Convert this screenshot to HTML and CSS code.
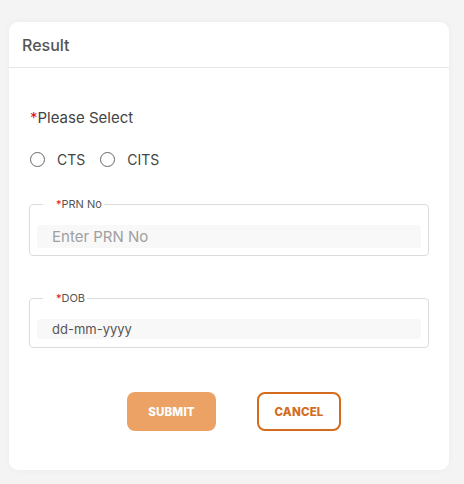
FILE: index.html
```html
<!DOCTYPE html>
<html>
<head>
<meta charset="utf-8">
<link rel="stylesheet" href="styles.css">
</head>
<body>
<div class="card">
  <div class="card-header">Result</div>
  <div class="card-body">
    <div class="label"><span class="req">*</span>Please Select</div>
    <div class="radios">
      <label class="radio"><input type="radio" name="t"><span>CTS</span></label>
      <label class="radio"><input type="radio" name="t"><span>CITS</span></label>
    </div>
    <fieldset class="field">
      <legend><span class="req">*</span>PRN No</legend>
      <div class="input placeholder">Enter PRN No</div>
    </fieldset>
    <fieldset class="field field-dob">
      <legend><span class="req">*</span>DOB</legend>
      <div class="input date">dd-mm-yyyy</div>
    </fieldset>
    <div class="actions">
      <button class="btn btn-submit">SUBMIT</button>
      <button class="btn btn-cancel">CANCEL</button>
    </div>
  </div>
</div>
</body>
</html>
```
FILE: styles.css
```css
html, body {
  margin: 0;
  padding: 0;
  background: #f4f4f4;
  font-family: Inter, "Noto Sans", sans-serif;
}
body {
  padding: 22px 15px 14px 9px;
}
.card {
  width: 440px;
  height: 448px;
  background: #fff;
  border-radius: 9px;
  box-shadow: 0 0 6px rgba(0,0,0,0.04);
  box-sizing: border-box;
}
.card-header {
  height: 46px;
  box-sizing: border-box;
  border-bottom: 1px solid #e6e6e6;
  padding-left: 13px;
  display: flex;
  align-items: center;
  font-size: 16px;
  font-weight: 500;
  color: #555;
}
.card-body {
  padding: 40px 20px 0 20px;
  display: flex;
  flex-direction: column;
}
.req { color: #e0101a; }
.label {
  font-size: 15px;
  line-height: 20px;
  color: #444;
  padding-left: 1px;
}
.radios {
  margin-top: 21px;
  display: flex;
  gap: 14px;
  height: 20px;
  align-items: center;
}
.radio {
  display: flex;
  align-items: center;
  gap: 12px;
  font-size: 14px;
  color: #444;
}
.radio input {
  appearance: none;
  -webkit-appearance: none;
  margin: 0 0 0 1px;
  width: 15px;
  height: 15px;
  border: 1px solid #666;
  border-radius: 50%;
  box-sizing: border-box;
}
.field {
  margin: 28px 0 0 0;
  border: 1px solid #dcdcdc;
  border-radius: 4px;
  padding: 0 7px 7px 7px;
  min-width: 0;
}
.field legend {
  margin-left: 6px;
  padding: 0 2px 0 13px;
  font-size: 11px;
  line-height: 14px;
  color: #555;
}
.field .input {
  margin-top: 14px;
  height: 23px;
  background: #f8f8f8;
  border-radius: 3px;
  padding-left: 15px;
  display: flex;
  align-items: center;
  font-size: 15px;
}
.placeholder { color: #a0a0a0; }
.field-dob {
  margin-top: 35px;
  padding-bottom: 8px;
}
.field-dob .input {
  height: 20px;
  font-size: 13px;
  color: #555;
}
.actions {
  margin-top: 44px;
  display: flex;
  justify-content: center;
  gap: 41px;
  padding-left: 10px;
}
.btn {
  height: 39px;
  border-radius: 8px;
  font-family: Inter, sans-serif;
  font-size: 11.5px;
  font-weight: 800;
  letter-spacing: 0.2px;
  cursor: pointer;
  box-sizing: border-box;
}
.btn-submit {
  width: 89px;
  background: #eba264;
  color: #fff;
  border: none;
}
.btn-cancel {
  width: 84px;
  background: #fff;
  color: #d36c1c;
  border: 2px solid #d36c1c;
}
```
